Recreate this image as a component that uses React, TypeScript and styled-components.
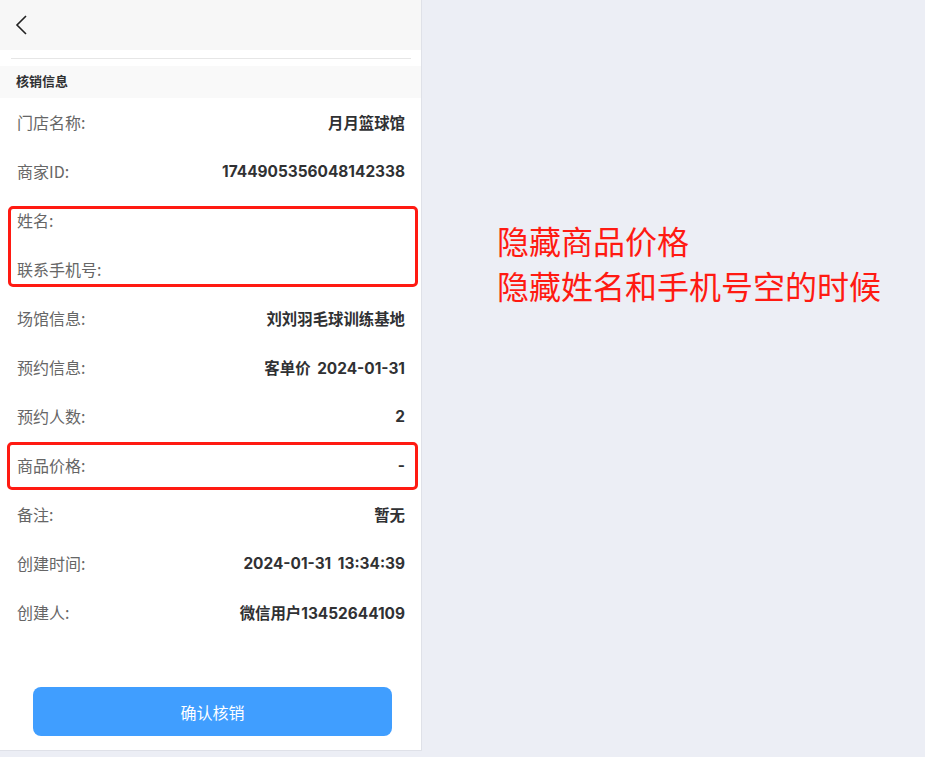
import React from "react";
import styled, { createGlobalStyle } from "styled-components";

const Global = createGlobalStyle`
  html, body { margin: 0; padding: 0; }
  body {
    background: #eceef5;
    font-family: "Noto Sans CJK SC", "Noto Sans", "Open Sans", sans-serif;
  }
`;

const Page = styled.div`
  display: flex;
  align-items: flex-start;
  width: 925px;
  height: 757px;
  overflow: hidden;
`;

const Panel = styled.div`
  width: 421px;
  height: 750px;
  background: #ffffff;
  border-right: 1px solid #dfe1e8;
  border-bottom: 1px solid #dfe1e8;
  display: flex;
  flex-direction: column;
`;

const Header = styled.div`
  height: 50px;
  background: #f7f7f7;
  display: flex;
  align-items: center;
  padding-left: 14px;
`;

const DividerWrap = styled.div`
  height: 16px;
  display: flex;
  align-items: center;
  padding: 0 10px 0 11px;
`;

const Divider = styled.div`
  flex: 1;
  height: 1px;
  background: #e6e6e6;
`;

const SectionTitle = styled.div`
  height: 32px;
  box-sizing: border-box;
  padding: 0 0 3px 16px;
  background: #f9f9f9;
  display: flex;
  align-items: center;
  font-size: 13px;
  font-weight: 700;
  color: #303133;
  margin-bottom: 1px;
`;

const List = styled.div`
  display: flex;
  flex-direction: column;
`;

const Row = styled.div`
  height: 49px;
  box-sizing: border-box;
  display: flex;
  align-items: center;
  justify-content: space-between;
  padding: 0 16px 3px 17px;
  font-size: 16px;
`;

const Label = styled.span`
  color: #666666;
`;

const Value = styled.span`
  color: #303133;
  font-weight: 700;
  font-size: 15.4px;
  word-spacing: 3px;
  font-family: "Inter", "Noto Sans CJK SC", sans-serif;
`;

type Box = { $l: number; $t: number; $r: number; $b: number };

const Highlight = styled.div<Box>`
  position: relative;
  &::after {
    content: "";
    position: absolute;
    left: ${(p) => p.$l}px;
    top: ${(p) => p.$t}px;
    right: ${(p) => p.$r}px;
    bottom: ${(p) => p.$b}px;
    border: 3.5px solid #ff1a12;
    border-radius: 5px;
    pointer-events: none;
  }
`;

const Footer = styled.div`
  margin-top: auto;
  padding: 0 29px 14px 33px;
`;

const Button = styled.button`
  width: 100%;
  height: 49px;
  border: none;
  border-radius: 8px;
  background: #409eff;
  color: #ffffff;
  font-family: inherit;
  font-size: 16px;
  cursor: pointer;
`;

const Note = styled.div`
  padding: 218px 0 0 75px;
  color: #ff1a12;
  font-size: 32px;
  line-height: 45px;
`;

const BackIcon = () => (
  <svg width="16" height="22" viewBox="0 0 16 22" fill="none">
    <path d="M12 2 L3 11 L12 20" stroke="#222" strokeWidth="1.6" />
  </svg>
);

type Item = [string, string];

const top: Item[] = [
  ["门店名称:", "月月篮球馆"],
  ["商家ID:", "1744905356048142338"],
];
const hidden: Item[] = [
  ["姓名:", ""],
  ["联系手机号:", ""],
];
const mid: Item[] = [
  ["场馆信息:", "刘刘羽毛球训练基地"],
  ["预约信息:", "客单价 2024-01-31"],
  ["预约人数:", "2"],
];
const price: Item[] = [["商品价格:", "-"]];
const rest: Item[] = [
  ["备注:", "暂无"],
  ["创建时间:", "2024-01-31 13:34:39"],
  ["创建人:", "微信用户13452644109"],
];

const renderRows = (items: Item[]) =>
  items.map(([l, v]) => (
    <Row key={l}>
      <Label>{l}</Label>
      <Value>{v}</Value>
    </Row>
  ));

export default function App() {
  return (
    <>
      <Global />
      <Page>
        <Panel>
          <Header>
            <BackIcon />
          </Header>
          <DividerWrap>
            <Divider />
          </DividerWrap>
          <SectionTitle>核销信息</SectionTitle>
          <List>
            {renderRows(top)}
            <Highlight $l={8} $t={9} $r={3} $b={8}>
              {renderRows(hidden)}
            </Highlight>
            {renderRows(mid)}
            <Highlight $l={7} $t={0} $r={3} $b={1}>
              {renderRows(price)}
            </Highlight>
            {renderRows(rest)}
          </List>
          <Footer>
            <Button>确认核销</Button>
          </Footer>
        </Panel>
        <Note>
          <div>隐藏商品价格</div>
          <div>隐藏姓名和手机号空的时候</div>
        </Note>
      </Page>
    </>
  );
}
